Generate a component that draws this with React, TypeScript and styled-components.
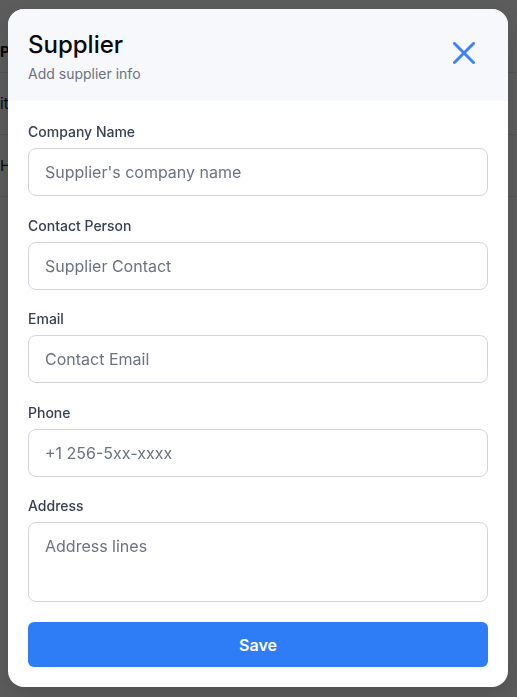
import React from "react";
import styled, { createGlobalStyle } from "styled-components";

const GlobalStyle = createGlobalStyle`
  html, body { margin: 0; padding: 0; }
  body {
    font-family: Inter, "Noto Sans", "Liberation Sans", sans-serif;
    background: #ffffff;
    color: #111827;
  }
  * { box-sizing: border-box; }
`;

const Page = styled.div`
  height: 697px;
  overflow: hidden;
  background: #ffffff;
`;

const Table = styled.div`
  display: flex;
  flex-direction: column;
  padding-top: 30px;
`;

const TableRow = styled.div<{ $head?: boolean }>`
  height: 62px;
  display: flex;
  align-items: center;
  font-size: 15px;
  font-weight: ${(p) => (p.$head ? 700 : 400)};
  border-bottom: 1px solid #e5e7eb;
  color: #111827;
  &:first-child { height: 43px; }
`;

const Overlay = styled.div`
  position: fixed;
  inset: 0;
  background: rgba(0, 0, 0, 0.64);
  display: flex;
  align-items: flex-start;
  justify-content: flex-start;
  padding: 9px 9px 10px 8px;
`;

const Modal = styled.div`
  width: 500px;
  height: 678px;
  background: #ffffff;
  border-radius: 16px;
  overflow: hidden;
  display: flex;
  flex-direction: column;
  box-shadow: 0 10px 30px rgba(0, 0, 0, 0.15);
`;

const Header = styled.div`
  background: #f6f8fc;
  display: flex;
  justify-content: space-between;
  align-items: flex-start;
  padding: 20px 20px 17px 20px;
`;

const TitleBlock = styled.div`
  display: flex;
  flex-direction: column;
  gap: 3px;
`;

const Title = styled.h2`
  margin: 0;
  font-size: 24px;
  line-height: 32px;
  font-weight: 500;
  color: #0b0b0f;
`;

const Subtitle = styled.p`
  margin: 0;
  font-size: 14px;
  line-height: 20px;
  color: #6b7280;
`;

const CloseButton = styled.button`
  border: none;
  background: transparent;
  padding: 0;
  margin: 13px 13px 0 0;
  width: 22px;
  height: 22px;
  display: flex;
  cursor: pointer;
`;

const Body = styled.form`
  display: flex;
  flex-direction: column;
  gap: 19.5px;
  padding: 21px 20px 20px 20px;
`;

const Field = styled.label`
  display: flex;
  flex-direction: column;
  gap: 6px;
`;

const LabelText = styled.span`
  font-size: 14px;
  line-height: 20px;
  font-weight: 500;
  color: #374151;
`;

const fieldStyles = `
  width: 100%;
  border: 1px solid #d1d5db;
  border-radius: 8px;
  background: #ffffff;
  font-family: Inter, "Noto Sans", "Liberation Sans", sans-serif;
  font-size: 16px;
  color: #111827;
  padding: 0 16px;
  outline: none;
  &::placeholder { color: #6b7280; opacity: 1; }
`;

const Input = styled.input`
  ${fieldStyles}
  height: 48px;
`;

const TextArea = styled.textarea`
  ${fieldStyles}
  height: 80px;
  padding-top: 11px;
  line-height: 24px;
  resize: none;
`;

const SaveButton = styled.button`
  margin-top: 0.5px;
  height: 45px;
  border: none;
  border-radius: 6px;
  background: #2f7df6;
  color: #ffffff;
  font-family: Inter, "Noto Sans", "Liberation Sans", sans-serif;
  font-size: 16px;
  font-weight: 600;
  cursor: pointer;
`;

const fields = [
  { label: "Company Name", placeholder: "Supplier's company name" },
  { label: "Contact Person", placeholder: "Supplier Contact" },
  { label: "Email", placeholder: "Contact Email" },
  { label: "Phone", placeholder: "+1 256-5xx-xxxx" },
];

export default function App() {
  return (
    <>
      <GlobalStyle />
      <Page>
        <Table>
          <TableRow $head>Phone</TableRow>
          <TableRow>item</TableRow>
          <TableRow>Hardware</TableRow>
        </Table>
      </Page>
      <Overlay>
        <Modal>
          <Header>
            <TitleBlock>
              <Title>Supplier</Title>
              <Subtitle>Add supplier info</Subtitle>
            </TitleBlock>
            <CloseButton type="button" aria-label="Close">
              <svg width="22" height="22" viewBox="0 0 22 22" fill="none">
                <path
                  d="M1.5 1.5 L20.5 20.5 M20.5 1.5 L1.5 20.5"
                  stroke="#3b82f6"
                  strokeWidth="3"
                  strokeLinecap="round"
                />
              </svg>
            </CloseButton>
          </Header>
          <Body onSubmit={(e) => e.preventDefault()}>
            {fields.map((f) => (
              <Field key={f.label}>
                <LabelText>{f.label}</LabelText>
                <Input placeholder={f.placeholder} />
              </Field>
            ))}
            <Field>
              <LabelText>Address</LabelText>
              <TextArea placeholder="Address lines" />
            </Field>
            <SaveButton type="submit">Save</SaveButton>
          </Body>
        </Modal>
      </Overlay>
    </>
  );
}
